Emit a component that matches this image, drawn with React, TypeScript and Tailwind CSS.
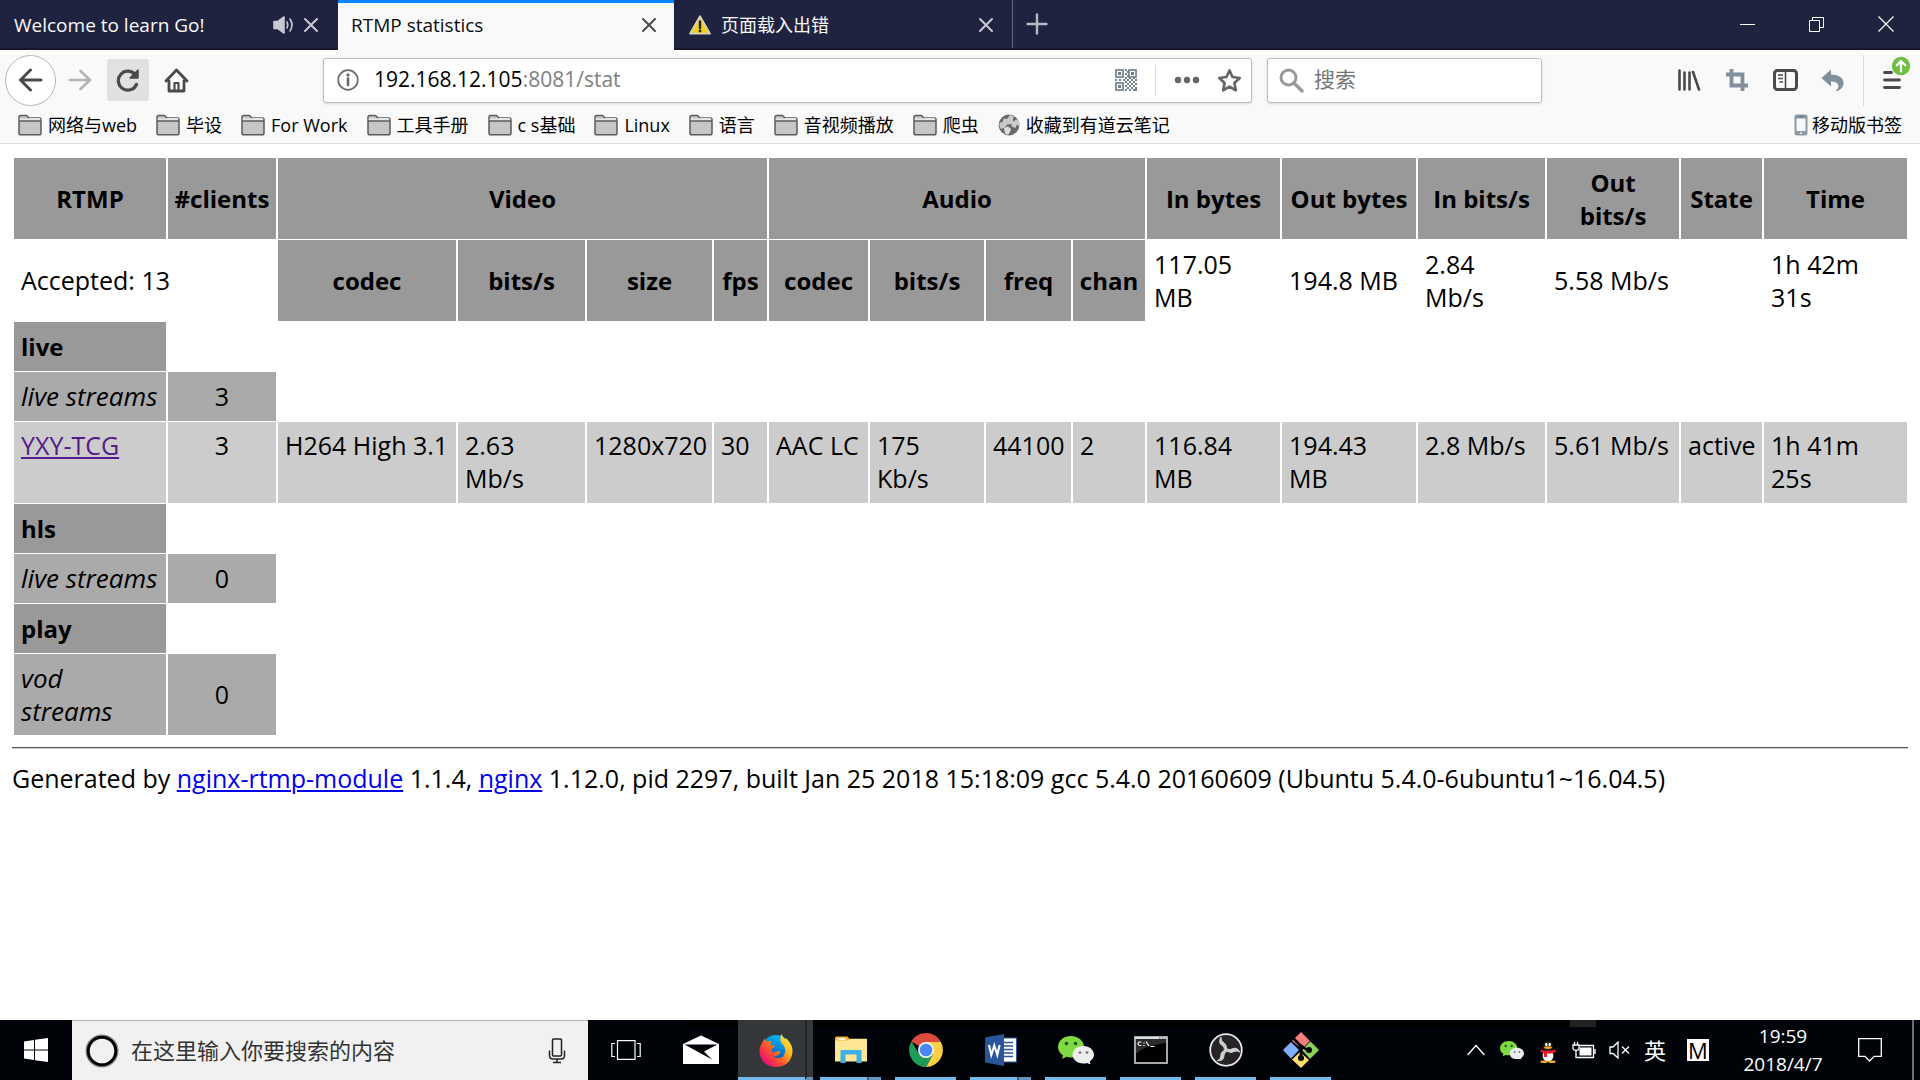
import type { ReactNode } from 'react';

const ui = 'font-[Open_Sans,Noto_Sans_CJK_SC,sans-serif]';

/* ---------- browser chrome icons ---------- */

function CloseIcon() {
  return (
    <svg width="16" height="16" viewBox="0 0 16 16" fill="none" stroke="currentColor" strokeWidth="2" strokeLinecap="round">
      <path d="M2 2l12 12M14 2L2 14" />
    </svg>
  );
}

function SpeakerIcon() {
  return (
    <svg width="22" height="20" viewBox="0 0 22 20" fill="none" stroke="#c9c9d4" strokeWidth="1.6" strokeLinecap="round">
      <path d="M1 6.5h4L11 2v16l-6-4.5H1z" fill="#c9c9d4" strokeLinejoin="round" />
      <path d="M14 7q1.6 3 0 6M17 4q4 6 0 12" />
    </svg>
  );
}

function WarningIcon() {
  return (
    <svg width="22" height="20" viewBox="0 0 22 20">
      <path d="M11 1.2L21 18.6H1z" fill="#f3cf1b" stroke="#d6d3c0" strokeWidth="1.8" strokeLinejoin="round" />
      <path d="M11 6.5v6.5" stroke="#222" strokeWidth="2.4" strokeLinecap="round" />
      <circle cx="11" cy="16" r="1.4" fill="#222" />
    </svg>
  );
}

function FolderIcon() {
  return (
    <svg width="24" height="22" viewBox="0 0 24 22" fill="#c6c6c6" stroke="#5b5b5b" strokeWidth="1.5" strokeLinejoin="round">
      <path d="M1 19V3a1.5 1.5 0 0 1 1.5-1.5h6L11 4h10.500A1.500 1.500 0 0 1 23 5.500V19a1.800 1.800 0 0 1-1.800 1.800H2.800A1.800 1.800 0 0 1 1 19z" />
      <path d="M1.700 4.500h8.500L11.500 4H21.500q.8.200.8 1.500v1.500H1.700z" fill="#e6e6e6" stroke="none" />
      <path d="M1 7h22" fill="none" />
    </svg>
  );
}

function GlobeIcon() {
  return (
    <svg width="22" height="22" viewBox="0 0 22 22">
      <circle cx="11" cy="11" r="10.400" fill="#6a6a6a" />
      <path d="M12 1l4 1.500-1 2.500 2.500 1L20 5q1.800 3 1.500 7l-3-1-1 3-3-1-1.500-3-4 .5-2 3L3 15q-2-3-1.500-6l3-1L6 4.500 9 5z" fill="#c9c9c9" />
      <path d="M6 14l4-1.500 3 2.500-1 3-2 3-3-1.500z" fill="#dcdcdc" />
      <path d="M15 4l3 .5-1 2-2 1z" fill="#6a6a6a" />
    </svg>
  );
}

function QrIcon() {
  const cells = [
    [10, 0], [12, 2], [10, 4], [10, 8], [12, 6], [12, 10], [14, 8], [16, 10], [18, 8], [20, 10],
    [14, 12], [18, 12], [12, 14], [16, 14], [20, 14], [14, 16], [18, 16], [12, 18], [16, 18], [20, 18],
    [14, 20], [18, 20], [10, 12], [10, 16], [10, 20], [0, 10], [4, 10], [8, 10], [20, 20],
  ];
  return (
    <svg width="22" height="22" viewBox="0 0 22 22" fill="#6f7f8d">
      {[[0, 0], [13, 0], [0, 13]].map(([x, y]) => (
        <g key={`${x}-${y}`}>
          <rect x={x + 1} y={y + 1} width="7" height="7" fill="none" stroke="#7b8996" strokeWidth="1.800" />
          <rect x={x + 3} y={y + 3} width="3" height="3" />
        </g>
      ))}
      {cells.map(([x, y]) => (
        <rect key={`${x},${y}`} x={x} y={y} width="2" height="2" />
      ))}
    </svg>
  );
}

/* ---------- taskbar icons ---------- */

function FirefoxIcon() {
  return (
    <svg width="34" height="34" viewBox="0 0 34 34">
      <defs>
        <linearGradient id="fx-body" x1="0.900" y1="0.100" x2="0.150" y2="0.800">
          <stop offset="0" stopColor="#fff04a" />
          <stop offset="0.350" stopColor="#ffb01e" />
          <stop offset="0.650" stopColor="#ff5a26" />
          <stop offset="1" stopColor="#ee1470" />
        </linearGradient>
        <linearGradient id="fx-globe" x1="0.700" y1="0" x2="0.300" y2="1">
          <stop offset="0" stopColor="#00c0f8" />
          <stop offset="1" stopColor="#0b3fae" />
        </linearGradient>
      </defs>
      <circle cx="17" cy="16" r="14" fill="url(#fx-globe)" />
      <path
        d="M5.500 5Q6 8 8 8.500q3-1 5 0-2 2-1.500 3.500l4 .5q.5 1.500-1.500 2.500l-2 1.500q1 3.500 4 2.500l3-1q2 0 2.500 1.500-3 4.500-8 3.500 6 4 10.500.5Q28 19 25 13l-3-3.500Q20.500 5 22.500 1q1 3 4 5.500l.5-1.500Q34 12 33.500 19 32 33 17 34 2 33 .5 19 .5 12 5 7z"
        fill="url(#fx-body)"
      />
    </svg>
  );
}

function ExplorerIcon() {
  return (
    <svg width="32" height="28" viewBox="0 0 32 28">
      <path d="M0 2q0-1.500 1.500-1.500h11L15 3.500V6H0z" fill="#f2b736" />
      <rect x="2.500" y="2.200" width="8" height="1.600" fill="#fff" />
      <path d="M0 4.500h13l2-1.800h17V25.500H0z" fill="#ffe695" />
      <path d="M5.500 27V14h21v13h-5v-8.500h-11V27z" fill="#3eb2e8" />
    </svg>
  );
}

function ChromeIcon() {
  return (
    <svg width="34" height="34" viewBox="0 0 34 34">
      <path d="M17 17L2.280 8.500A17 17 0 0 1 31.720 8.500z" fill="#dc4b3e" />
      <path d="M17 9h14.900A17 17 0 0 1 17 34l7-13z" fill="#fdcf45" />
      <path d="M2.500 8.300L10 21l7 4-4.500 8.400A17 17 0 0 1 2.500 8.300z" fill="#1f9d58" />
      <path d="M17 25l7-4-7 13q-2.500 0-4.600-.6z" fill="#1f9d58" />
      <circle cx="17" cy="17" r="8" fill="#f4f4f4" />
      <circle cx="17" cy="17" r="6.300" fill="#4788f0" />
    </svg>
  );
}

function WordIcon() {
  return (
    <svg width="32" height="32" viewBox="0 0 32 32">
      <rect x="17" y="4" width="14.500" height="24" fill="#fff" stroke="#2a5699" />
      <path d="M19 8.500h9M19 12h9M19 15.500h9M19 19h9M19 22.500h9" stroke="#2a5699" strokeWidth="1.700" />
      <path d="M0 3.500L19 0v32L0 28.500z" fill="#2a5699" />
      <path d="M4 11l2.300 10L9.300 11.500 12.300 21l2.300-10" fill="none" stroke="#fff" strokeWidth="2.100" />
    </svg>
  );
}

function WeChatIcon({ size }: { size: number }) {
  return (
    <svg width={size} height={size * 0.78} viewBox="0 0 36 28">
      <path d="M13 0C5.500 0 0 4.800 0 11c0 3.600 2 6.500 5 8.400L4 23l4.500-2.200q2 .7 4.500.7c7 0 13-4.500 13-10.500S20.500 0 13 0z" fill="#7fd943" />
      <circle cx="8.500" cy="7.500" r="1.800" fill="#27531a" />
      <circle cx="17.500" cy="7.500" r="1.800" fill="#27531a" />
      <path d="M25.500 10C19 10 14.500 14 14.500 18.800s4.500 8.600 11 8.600q2 0 3.500-.5l3.500 1.600-.8-3c2.500-1.600 4.300-4 4.300-6.700 0-4.800-4.500-8.800-10.500-8.800z" fill="#eceeee" />
      <circle cx="22" cy="16.500" r="1.400" fill="#777" />
      <circle cx="29" cy="16.500" r="1.400" fill="#777" />
    </svg>
  );
}

function TerminalIcon() {
  return (
    <svg width="34" height="28" viewBox="0 0 34 28">
      <rect x="1" y="1" width="32" height="26" fill="#000" stroke="#b9bcbe" strokeWidth="1.800" />
      <path d="M2 3h30v4Q12 9 3 17H2z" fill="#2c2c2c" />
      <path d="M1 2h32" stroke="#d7e0e6" strokeWidth="2" />
      <path d="M25 2h1.500M28 2h1.500M31 2h1" stroke="#456" />
      <path d="M7.500 6H5.500Q4 6 4 7.500T5.500 9.500h2M10 6.500v1M10 9v1M12 5.500l3 4.500M16.500 10.500h4" fill="none" stroke="#fff" strokeWidth="1.200" />
    </svg>
  );
}

function ObsIcon() {
  return (
    <svg width="34" height="34" viewBox="0 0 34 34">
      <circle cx="17" cy="17" r="15.800" fill="#262427" stroke="#e8e8e8" strokeWidth="1.800" />
      {[0, 120, 240].map((a) => (
        <path key={a} d="M17 17.500Q18.500 12 14.500 9.500 11.500 7.500 12 4q-3 5 .5 8 3.500 2 3 5.500z" fill="#cfcfcf" stroke="#cfcfcf" strokeWidth="1" transform={`rotate(${a} 17 17)`} />
      ))}
    </svg>
  );
}

function GitIcon() {
  return (
    <svg width="36" height="36" viewBox="0 0 36 36">
      <path d="M18 0l9 9-8 8-10-8z" fill="#fb7d7d" />
      <path d="M27.500 9.500L36 18l-9 9-8-9z" fill="#8bd45c" />
      <path d="M8 10l8 8-8 8.500L0 18z" fill="#80b0fb" />
      <path d="M17 20l9 8-8 8-9-8.500z" fill="#fddd72" />
      <path d="M10 6l8 8v12M18 14l8 5" stroke="#000409" strokeWidth="2.600" fill="none" />
      <circle cx="18" cy="15" r="2.600" fill="#000409" />
      <circle cx="18" cy="26" r="3" fill="#000409" />
      <circle cx="26" cy="18" r="3" fill="#000409" />
    </svg>
  );
}

function PenguinIcon() {
  return (
    <svg width="16" height="22" viewBox="0 0 16 22">
      <ellipse cx="8" cy="13" rx="6.500" ry="7.500" fill="#111" />
      <ellipse cx="8" cy="15" rx="5.300" ry="5.500" fill="#fff" />
      <ellipse cx="8" cy="5" rx="5" ry="5" fill="#1b1b1b" />
      <ellipse cx="6.300" cy="3.500" rx="1.200" ry="1.800" fill="#fff" />
      <ellipse cx="9.700" cy="3.500" rx="1.200" ry="1.800" fill="#fff" />
      <ellipse cx="8" cy="6.600" rx="4" ry="1.300" fill="#f5a623" />
      <path d="M.5 8.500q7.500 2.500 15 0v3Q11 13 7 12.500V16H4v-4L.5 11z" fill="#e8182c" />
      <ellipse cx="4" cy="20.700" rx="3.800" ry="1.300" fill="#f5a623" />
      <ellipse cx="12" cy="20.700" rx="3.800" ry="1.300" fill="#f5a623" />
    </svg>
  );
}

/* ---------- browser chrome ---------- */

function TabStrip() {
  const darkTab = 'flex items-center border-b-2 border-[#15172c] pt-[2px] text-[#f9f9fa]';
  return (
    <header className="flex h-[50px] bg-[#20233f]">
      <div className={`${darkTab} w-[338px] pr-[19px] pl-[14px] text-[19px]`}>
        <span className="flex-1">Welcome to learn Go!</span>
        <button aria-label="Mute tab" className="mr-[8px]"><SpeakerIcon /></button>
        <button aria-label="Close tab" className="text-[#c9c9d4]"><CloseIcon /></button>
      </div>
      <div className="flex w-[336px] items-center border-t-3 border-[#0a84ff] bg-[#f9f9fa] pr-[17px] pb-[3px] pl-[13px] text-[19px] text-[#0c0c0d]">
        <span className="flex-1">RTMP statistics</span>
        <button aria-label="Close tab" className="text-[#4a4a4f]"><CloseIcon /></button>
      </div>
      <div className={`${darkTab} w-[338px] pr-[18px] pl-[15px] text-[18px]`}>
        <WarningIcon />
        <span className="ml-[10px] flex-1">页面载入出错</span>
        <button aria-label="Close tab" className="text-[#c9c9d4]"><CloseIcon /></button>
      </div>
      <div className="flex flex-1 items-center border-b-2 border-[#15172c]">
        <button aria-label="New tab" className="flex h-full w-[49px] items-center justify-center border-l border-[#62647a]">
          <svg width="22" height="22" viewBox="0 0 22 22" stroke="#b9bac6" strokeWidth="2.400" strokeLinecap="round"><path d="M11 1.500v19M1.500 11h19" /></svg>
        </button>
        <div className="ml-auto flex h-full">
          <button aria-label="Minimize" className="flex w-[69px] items-center justify-center">
            <svg width="15" height="15" viewBox="0 0 15 15" stroke="#fff"><path d="M0 7.500h15" /></svg>
          </button>
          <button aria-label="Restore" className="flex w-[69px] items-center justify-center">
            <svg width="15" height="15" viewBox="0 0 15 15" stroke="#fff" fill="none"><path d="M.5 3.500h10v11H.5zM3.500 3.500v-3h11v10h-4" /></svg>
          </button>
          <button aria-label="Close" className="flex w-[69px] items-center justify-center">
            <svg width="16" height="16" viewBox="0 0 16 16" stroke="#fff" strokeWidth="1.200"><path d="M.5.5l15 15M15.500.5l-15 15" /></svg>
          </button>
        </div>
      </div>
    </header>
  );
}

function NavBar() {
  const toolButton = 'flex h-[42px] w-[48px] items-center justify-center';
  return (
    <div className="flex h-[60px] items-center bg-[#f9f9fa] pl-[5px]">
      <button aria-label="Back" className="flex size-[51px] items-center justify-center rounded-full border border-[#b5b5b6] bg-white">
        <svg width="25" height="24" viewBox="0 0 25 24" fill="none" stroke="#4a4a4a" strokeWidth="3" strokeLinecap="round" strokeLinejoin="round"><path d="M23 12H3M12.500 2L2.500 12l10 10" /></svg>
      </button>
      <button aria-label="Forward" className="flex h-[42px] w-[48px] items-center justify-center">
        <svg width="24" height="24" viewBox="0 0 24 24" fill="none" stroke="#b4b4b5" strokeWidth="2.600" strokeLinecap="round" strokeLinejoin="round"><path d="M2 12h19M12.500 3l9.500 9-9.500 9" /></svg>
      </button>
      <button aria-label="Reload" className="ml-[3px] flex size-[42px] items-center justify-center rounded-[3px] bg-[#e1e1e2]">
        <svg width="24" height="24" viewBox="0 0 24 24" fill="none" stroke="#4a4a4a" strokeWidth="3.200" strokeLinecap="round"><path d="M20.500 16.500A9.500 9.500 0 1 1 19.500 7" /><path d="M22 2v8h-8z" fill="#4a4a4a" strokeWidth="1.500" strokeLinejoin="round" /></svg>
      </button>
      <button aria-label="Home" className="ml-[6px] flex size-[42px] items-center justify-center">
        <svg width="25" height="25" viewBox="0 0 25 25" fill="none" stroke="#4a4a4a" strokeWidth="2.800" strokeLinecap="round" strokeLinejoin="round"><path d="M2 13L12.500 2 23 13M5 13v10h15V13" /><path d="M10.500 22v-7h4v7" strokeWidth="2.200" /></svg>
      </button>

      <div className="ml-[126px] flex h-[45px] flex-1 items-center rounded-[3px] border border-[#bdbdbe] bg-white pr-[9px] pl-[13px] shadow-sm">
        <svg width="22" height="22" viewBox="0 0 22 22" fill="none" stroke="#6a6a6b" strokeWidth="1.700"><circle cx="11" cy="11" r="9.800" /><path d="M11 9.500v6.500" strokeWidth="2.600" strokeLinecap="round" /><circle cx="11" cy="6" r=".8" fill="#6a6a6b" /></svg>
        <div role="textbox" aria-label="Address" contentEditable suppressContentEditableWarning className="ml-[15px] flex-1 text-[21px] text-black outline-none">
          192.168.12.105<span className="text-[#808081]">:8081/stat</span>
        </div>
        <button aria-label="QR code"><QrIcon /></button>
        <span className="mx-[18px] h-[31px] w-px bg-[#dcdcdd]" />
        <button aria-label="Page actions" className="mr-[17px]">
          <svg width="26" height="8" viewBox="0 0 26 8" fill="#666"><circle cx="4" cy="4" r="3.200" /><circle cx="13" cy="4" r="3.200" /><circle cx="22" cy="4" r="3.200" /></svg>
        </button>
        <button aria-label="Bookmark this page">
          <svg width="25" height="25" viewBox="0 0 25 25" fill="none" stroke="#666" strokeWidth="2.700" strokeLinejoin="round"><path d="M12.500 2.500l3 6.500 7.200 1-5.300 5 1.400 7.300-6.300-3.600-6.300 3.600 1.400-7.300-5.300-5 7.200-1z" /></svg>
        </button>
      </div>

      <label className="ml-[15px] flex h-[45px] w-[275px] items-center rounded-[3px] border border-[#bdbdbe] bg-white pl-[11px] shadow-sm">
        <svg width="25" height="25" viewBox="0 0 25 25" fill="none" stroke="#989899" strokeWidth="3"><circle cx="9.500" cy="9.500" r="7.500" /><path d="M15 15l8 8" strokeWidth="3.400" strokeLinecap="round" /></svg>
        <input aria-label="搜索" placeholder="搜索" className="ml-[10px] w-[200px] text-[21px] outline-none placeholder:text-[#757576]" />
      </label>

      <div className="ml-[123px] flex items-center">
        <button aria-label="Library" className={toolButton}>
          <svg width="24" height="22" viewBox="0 0 24 22" stroke="#4a4a4a" strokeWidth="2.600" strokeLinecap="round"><path d="M2.500 1.500v19M7.500 3.500v17M12.500 3.500v17M16 3l6 17.500" /></svg>
        </button>
        <button aria-label="Screenshot" className={toolButton}>
          <svg width="22" height="22" viewBox="0 0 22 22" fill="none" stroke="#82909d" strokeWidth="3.800"><path d="M5.500 0v16.500H22M0 5.500h16.500V22" /></svg>
        </button>
        <button aria-label="Sidebar" className={toolButton}>
          <svg width="25" height="22" viewBox="0 0 25 22" fill="none" stroke="#4a4a4a"><rect x="1.500" y="1.500" width="22" height="19" rx="3" strokeWidth="3" /><path d="M12.500 2v18" strokeWidth="1.600" /><path d="M5 6h5M5 9.500h5M6.500 13H10" strokeWidth="1.500" /></svg>
        </button>
        <button aria-label="Undo close tab" className={toolButton}>
          <svg width="24" height="22" viewBox="0 0 24 22" fill="#82909d"><path d="M10 .5v5C18 5.500 23 9 22.500 15q-.5 5-6.500 7-2 0-1-.8 4-3.200 1.500-6.500-1.500-2.200-6.500-2.200v5L.5 9z" /></svg>
        </button>
        <span className="ml-[6px] h-[51px] w-px bg-[#dcdcdd]" />
        <button aria-label="Open menu" className="relative flex h-[42px] w-[56px] items-center justify-center">
          <svg width="18" height="20" viewBox="0 0 18 20" stroke="#4a4a4a" strokeWidth="2.800" strokeLinecap="round"><path d="M1.500 2.500h7M1.500 10h15M1.500 17.500h15" /></svg>
          <svg className="absolute -top-[3px] right-[9px]" width="20" height="20" viewBox="0 0 20 20"><circle cx="10" cy="10" r="9.200" fill="#70bf41" /><path d="M10 15.500V5.500M5.800 9.300L10 5l4.200 4.300" fill="none" stroke="#fff" strokeWidth="2.200" strokeLinecap="round" strokeLinejoin="round" /></svg>
        </button>
      </div>
    </div>
  );
}

const bookmarks = ['网络与web', '毕设', 'For Work', '工具手册', 'c s基础', 'Linux', '语言', '音视频播放', '爬虫'];

function BookmarksBar() {
  return (
    <nav className="flex h-[34px] items-center gap-[19px] border-b border-[#dededf] bg-[#f9f9fa] pr-[18px] pb-[3px] pl-[18px] text-[18px] whitespace-nowrap text-black">
      {bookmarks.map((name) => (
        <a key={name} href="#" className="flex items-center gap-[6px]">
          <FolderIcon />
          {name}
        </a>
      ))}
      <a href="#" className="flex items-center gap-[6px]">
        <GlobeIcon />
        收藏到有道云笔记
      </a>
      <a href="#" className="ml-auto flex items-center gap-[4px]">
        <svg width="14" height="22" viewBox="0 0 14 22"><rect x=".5" y=".5" width="13" height="21" rx="2" fill="#8d99a3" /><rect x="2.500" y="4.500" width="9" height="12.500" fill="#f4f8fb" /><path d="M4.500 2.500h5" stroke="#5d6972" /><circle cx="7" cy="19.200" r="1.100" fill="#dbe3e9" /></svg>
        移动版书签
      </a>
    </nav>
  );
}

/* ---------- statistics page ---------- */

const cell = 'px-[7px] py-[7px] text-left';
const dark = 'bg-[#999]';
const mid = 'bg-[#aaa]';

function Head({ children, span = 1 }: { children: ReactNode; span?: number }) {
  return (
    <th colSpan={span} className="h-[81px] bg-[#999] px-0 py-[7px] text-center text-[24px] font-bold">
      {children}
    </th>
  );
}

function Application({ name }: { name: string }) {
  return (
    <tr>
      <th scope="row" className={`${cell} ${dark} h-[49px] text-[24px] font-bold`}>{name}</th>
    </tr>
  );
}

function StreamGroup({ label, clients }: { label: string; clients: number }) {
  return (
    <tr>
      <td className={`${cell} ${mid} h-[49px] text-[26px] whitespace-nowrap italic`}>{label}</td>
      <td className={`${mid} text-center`}>{clients}</td>
    </tr>
  );
}

const columns = [
  'w-[152px]', 'w-[108px]', 'w-[178px]', 'w-[127px]', 'w-[125px]', 'w-[53px]', 'w-[99px]', 'w-[114px]', 'w-[85px]',
  'w-[72px]', 'w-[133px]', 'w-[134px]', 'w-[127px]', 'w-[132px]', 'w-[81px]', 'w-[143px]',
];

const stream = [
  'H264 High 3.1', '2.63 Mb/s', '1280x720', '30', 'AAC LC', '175 Kb/s', '44100', '2',
  '116.84 MB', '194.43 MB', '2.8 Mb/s', '5.61 Mb/s', 'active', '1h 41m 25s',
];

function StatsPage() {
  return (
    <main className="flex-1 bg-white px-[12px] pt-[13px] text-[25px] leading-[33px] text-black">
      <table className="w-full table-fixed border-separate border-spacing-x-[2px] border-spacing-y-px">
        <colgroup>
          {columns.map((width, i) => <col key={i} className={width} />)}
        </colgroup>
        <tbody>
          <tr>
            <Head>RTMP</Head>
            <Head>#clients</Head>
            <Head span={4}>Video</Head>
            <Head span={4}>Audio</Head>
            <Head>In bytes</Head>
            <Head>Out bytes</Head>
            <Head>In bits/s</Head>
            <Head>Out<br />bits/s</Head>
            <Head>State</Head>
            <Head>Time</Head>
          </tr>
          <tr>
            <td colSpan={2} className={cell}>Accepted: 13</td>
            {['codec', 'bits/s', 'size', 'fps'].map((h) => <Head key={h}>{h}</Head>)}
            {['codec', 'bits/s', 'freq', 'chan'].map((h) => <Head key={h}>{h}</Head>)}
            <td className={cell}>117.05 MB</td>
            <td className={`${cell} whitespace-nowrap`}>194.8 MB</td>
            <td className={cell}>2.84<br />Mb/s</td>
            <td className={`${cell} whitespace-nowrap`}>5.58 Mb/s</td>
            <td />
            <td className={cell}>1h 42m 31s</td>
          </tr>
          <Application name="live" />
          <StreamGroup label="live streams" clients={3} />
          <tr className="align-top">
            <td className={`${cell} h-[81px] bg-[#ccc]`}><a href="#" className="text-[#551a8b] underline decoration-2 underline-offset-2">YXY-TCG</a></td>
            <td className="bg-[#ccc] py-[7px] text-center">3</td>
            {stream.map((value, i) => (
              <td key={i} className={`${cell} bg-[#ccc]`}>{value}</td>
            ))}
          </tr>
          <Application name="hls" />
          <StreamGroup label="live streams" clients={0} />
          <Application name="play" />
          <tr>
            <td className={`${cell} ${mid} h-[81px] text-[26px] italic`}>vod<br />streams</td>
            <td className={`${mid} text-center`}>0</td>
          </tr>
        </tbody>
      </table>
      <hr className="mt-[11px] border-t border-b border-t-[#555] border-b-[#ccc]" />
      <p className="mt-[13px]">
        Generated by <a href="#" className="text-[#0000ee] underline decoration-2 underline-offset-2">nginx-rtmp-module</a> 1.1.4,{' '}
        <a href="#" className="text-[#0000ee] underline decoration-2 underline-offset-2">nginx</a> 1.12.0, pid 2297, built Jan 25 2018
        15:18:09 gcc 5.4.0 20160609 (Ubuntu 5.4.0-6ubuntu1~16.04.5)
      </p>
    </main>
  );
}

/* ---------- taskbar ---------- */

function TaskButton({ label, children, state = 'idle' }: { label: string; children: ReactNode; state?: 'idle' | 'open' | 'stacked' | 'active' }) {
  return (
    <button aria-label={label} className={`relative flex w-[75px] items-center justify-center ${state === 'active' ? 'bg-[#35383b]' : ''}`}>
      {children}
      {state === 'active' && (
        <span className="absolute inset-0 flex">
          <span className="flex-1 border-b-3 border-[#76b9ed]" />
          <span className="w-[8px] border-b-3 border-l-2 border-b-[#6494bc] border-l-[#222528]" />
        </span>
      )}
      {(state === 'open' || state === 'stacked') && (
        <span className="absolute inset-x-[7px] bottom-0 flex h-[3px] bg-[#76b9ed]">
          {state === 'stacked' && <span className="ml-auto w-[14px] border-l-2 border-[#42617d] bg-[#6494bc]" />}
        </span>
      )}
    </button>
  );
}

function Taskbar() {
  const tray = 'flex items-center justify-center';
  return (
    <footer className="relative flex h-[60px] bg-[#000409] text-white">
      <div aria-hidden="true" className="absolute top-0 right-[324px] left-[688px] flex h-[7px] bg-black">
        <span className="ml-auto w-[26px] bg-[#222]" />
      </div>
      <button aria-label="Start" className="flex w-[72px] items-center justify-center">
        <svg width="24" height="24" viewBox="0 0 24 24" fill="#fff"><path d="M0 3.400L10 2v9.500H0zM11 1.800L24 0v11.500H11zM0 12.500h10V22L0 20.600zM11 12.500h13V24l-13-1.800z" /></svg>
      </button>
      <label className="flex w-[516px] items-center border-t border-[#b5b5b5] bg-[#f1f1f1] pr-[22px] pl-[13px]">
        <svg width="34" height="34" viewBox="0 0 34 34" fill="none"><circle cx="17" cy="17" r="15" stroke="#8a8a8a" strokeWidth="3" /><circle cx="17" cy="17" r="13.800" stroke="#000" strokeWidth="3" /></svg>
        <input aria-label="Search Windows" placeholder="在这里输入你要搜索的内容" className="ml-[12px] min-w-0 flex-1 text-[22px] outline-none placeholder:text-[#333]" />
        <svg width="18" height="26" viewBox="0 0 18 26" fill="none" stroke="#222" strokeWidth="1.500"><rect x="4.500" y="1" width="9" height="17" rx="1" /><path d="M1.500 12.500v5q0 3.500 3.500 3.500h8q3.500 0 3.500-3.500v-5M9 21v3.500M5 24.500h8" /></svg>
      </label>
      <TaskButton label="Task view">
        <svg width="30" height="20" viewBox="0 0 30 20" fill="none" stroke="#fff" strokeWidth="1.200"><rect x="6.500" y=".6" width="17.500" height="18.800" /><path d="M4 3.500H.8v13H4M26 3.500h3.200v13H26" /></svg>
      </TaskButton>
      <TaskButton label="Mail">
        <svg width="36" height="30" viewBox="0 0 36 30" fill="#fff"><path d="M0 9L18 .5 36 9v20H0z" /><path d="M1.500 9.500h33L21 16.500l8 8z" fill="#000409" /></svg>
      </TaskButton>
      <TaskButton label="Firefox" state="active"><FirefoxIcon /></TaskButton>
      <TaskButton label="File Explorer" state="stacked"><ExplorerIcon /></TaskButton>
      <TaskButton label="Chrome" state="open"><ChromeIcon /></TaskButton>
      <TaskButton label="Word" state="stacked"><WordIcon /></TaskButton>
      <TaskButton label="WeChat" state="open"><WeChatIcon size={36} /></TaskButton>
      <TaskButton label="Command Prompt" state="open"><TerminalIcon /></TaskButton>
      <TaskButton label="OBS Studio" state="open"><ObsIcon /></TaskButton>
      <TaskButton label="Git" state="open"><GitIcon /></TaskButton>

      <div className="ml-auto flex">
        <button aria-label="Show hidden icons" className={`${tray} w-[36px]`}>
          <svg width="18" height="12" viewBox="0 0 18 12" fill="none" stroke="#fff" strokeWidth="1.500"><path d="M.5 11L9 1.500l8.500 9.500" /></svg>
        </button>
        <button aria-label="WeChat notifications" className={`${tray} w-[36px]`}><WeChatIcon size={24} /></button>
        <button aria-label="QQ" className={`${tray} w-[35px] pt-[4px]`}><PenguinIcon /></button>
        <button aria-label="Battery" className={`${tray} w-[37px]`}>
          <svg width="24" height="18" viewBox="0 0 24 18" fill="none" stroke="#fff" strokeWidth="1.300"><path d="M7 4.500h14.500v12H4V13M23 8v5" /><rect x="7.500" y="6.500" width="12" height="8" fill="#fff" stroke="none" /><path d="M1 4h6v3.500Q6.500 9.500 4 9.500T1 7.500zM2.500 4V1M5.500 4V1M4 9.500v4" /></svg>
        </button>
        <button aria-label="Volume muted" className={`${tray} w-[34px]`}>
          <svg width="21" height="18" viewBox="0 0 21 18" fill="none" stroke="#fff" strokeWidth="1.300"><path d="M1 6v6.500h3L9 17V1L4 6zM13 5.500l7 7M20 5.500l-7 7" /></svg>
        </button>
        <button className={`${tray} w-[38px] text-[22px]`}>英</button>
        <button className={`${tray} w-[48px]`}>
          <span className="flex size-[22px] items-center justify-center bg-white text-[22px] leading-[22px] text-black">M</span>
        </button>
        <button className="w-[122px] text-center text-[19px] leading-[28px]">
          19:59
          <br />
          2018/4/7
        </button>
        <button aria-label="Notifications" className={`${tray} w-[52px]`}>
          <svg width="24" height="24" viewBox="0 0 24 24" fill="none" stroke="#fff" strokeWidth="1.300"><path d="M.7.7h22.600v17.600h-7L11.500 23 7 18.300H.7z" /></svg>
        </button>
        <button aria-label="Show desktop" className="ml-[16px] w-[8px] border-l-2 border-[#6b6d70]" />
      </div>
    </footer>
  );
}

export default function App() {
  return (
    <div className={`flex min-h-screen flex-col ${ui}`}>
      <TabStrip />
      <NavBar />
      <BookmarksBar />
      <StatsPage />
      <Taskbar />
    </div>
  );
}
